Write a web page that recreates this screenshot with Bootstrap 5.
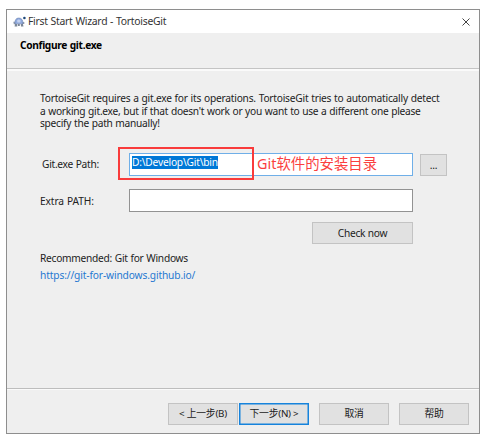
<!DOCTYPE html>
<html lang="zh-CN">
<head>
<meta charset="utf-8">
<meta name="viewport" content="width=device-width, initial-scale=1">
<title>First Start Wizard - TortoiseGit</title>
<link rel="stylesheet" href="https://cdn.jsdelivr.net/npm/bootstrap@5.3.0/dist/css/bootstrap.min.css">
<style>
body{background:#fff;overflow:hidden;font-family:"Noto Sans","Noto Sans CJK SC",sans-serif;font-size:10.2px;line-height:12.6px;letter-spacing:-.27px;word-spacing:.4px;color:#222}
.wizard{width:474px;height:425px;margin:9px 0 0 6px;border:1px solid #8e8e8e;background:#efefef}
.titlebar{height:23px;background:#fff;padding:0 9px 0 6px}
.caption{font-size:10.4px;color:#333;margin-left:2px;letter-spacing:-.27px}
.heading{height:38px;padding:6px 13px;border-bottom:2px solid #fafafa;box-shadow:inset 0 -1px #c4c4c4;color:#000;letter-spacing:-.33px}
.content-area{height:317px;padding:21px 32px 0 33px}
.intro{height:53px}
.intro .ln:first-child{letter-spacing:-.22px}
.field-row{height:23px}
.field-row label{width:89px}
.field-row .path-label{padding-left:2px;letter-spacing:-.28px}
.field-row .extra-label{letter-spacing:-.1px;padding-top:1px}
.extra-row{margin-top:13px}
.check-row{margin-top:10px}
.field-row .form-control{width:284px;height:23px;font-size:10.2px;line-height:12px;letter-spacing:-.2px;padding:2px;border:1px solid #929292;border-radius:0;background:#fff;color:#222}
.field-row .form-control.active-field{border-color:#6fafe8}
.selection{background:#0078d7;color:#fff;height:13px}
.btn-win{height:22px;padding:0;font-size:10.2px;line-height:12px;letter-spacing:-.25px;border:1px solid #c3c3c3;border-radius:0;background:#e1e1e1;color:#222}
.btn-win.btn-default-action{border:1px solid #1683dc;box-shadow:inset 0 0 0 .5px #1683dc}
.w-dots{width:27px;margin-left:7px}
.w-check{width:101px;margin-right:34px}
.w-step{width:70px;font-size:9.8px}
.gap-step{margin-left:1px}
.gap-group{margin-left:10px}
.site-link{color:#1f78d1;letter-spacing:-.13px}
.footer-bar{height:45px;border-top:1px solid #bdbdbd;box-shadow:inset 0 1px #fafafa;padding:14px 10px 0 0}
.callout-box{position:absolute;left:118px;top:147px;width:136px;height:33px;border:2px solid #f93b3b}
.callout-text{position:absolute;left:257px;top:154px;font-size:14.4px;line-height:20px;letter-spacing:0;color:#fb3f3f;white-space:nowrap}
.ln{display:block;white-space:nowrap;width:max-content}
</style>
<script src="https://cdn.jsdelivr.net/npm/bootstrap@5.3.0/dist/js/bootstrap.bundle.min.js"></script>
</head>
<body>
<main class="wizard">
  <header class="titlebar d-flex align-items-center">
    <svg width="13" height="12" viewBox="0 0 13 12" aria-hidden="true">
      <path d="M.3 5.8h2.5v2.4H.8zM9 6h2.3v2H9z" fill="#8e98a8"/>
      <path d="M2 7.8C1.5 4 3.2 2 5.8 2s4.5 2 4 5.8z" fill="#8fa9dc" stroke="#7186b4" stroke-width=".6"/>
      <path d="M4 4.4l1.8-1.2 1.9 1.2-.4 2H4.4z" fill="#c3d1ef"/>
      <path d="M2 8h2.3v2.6H1.6zM5 8h1.8v2H5zM7.8 8h2.1l.6 2.6H8z" fill="#7c8797"/>
      <circle cx="11.4" cy="2" r="1.3" fill="#1d4778"/>
    </svg>
    <span class="caption">First Start Wizard - TortoiseGit</span>
    <svg class="ms-auto" width="8" height="8" viewBox="0 0 8 8" aria-label="Close"><path d="M.5.5l7 7M7.5.5l-7 7" stroke="#444" stroke-width="1"/></svg>
  </header>
  <div class="heading fw-bold"><span class="ln">Configure git.exe</span></div>
  <section class="content-area">
    <div class="intro">
      <span class="ln">TortoiseGit requires a git.exe for its operations. TortoiseGit tries to automatically detect</span>
      <span class="ln">a working git.exe, but if that doesn't work or you want to use a different one please</span>
      <span class="ln">specify the path manually!</span>
    </div>
    <div class="d-flex align-items-center field-row mt-2">
      <label class="path-label">Git.exe Path:</label>
      <div class="form-control active-field d-flex"><span class="selection">D:\Develop\Git\bin</span></div>
      <button class="btn btn-win w-dots">...</button>
    </div>
    <div class="d-flex align-items-center field-row extra-row">
      <label class="extra-label">Extra PATH:</label>
      <input class="form-control" aria-label="Extra PATH">
    </div>
    <div class="d-flex justify-content-end check-row"><button class="btn btn-win w-check">Check now</button></div>
    <div class="mt-2"><span class="ln">Recommended: Git for Windows</span></div>
    <div class="mt-1"><a class="site-link ln text-decoration-none" href="#">https://git-for-windows.github.io/</a></div>
  </section>
  <footer class="footer-bar d-flex justify-content-end">
    <button class="btn btn-win w-step">&lt; 上一步(B)</button>
    <button class="btn btn-win btn-default-action w-step gap-step">下一步(N) &gt;</button>
    <button class="btn btn-win w-step gap-group">取消</button>
    <button class="btn btn-win w-step gap-group">帮助</button>
  </footer>
</main>
<div class="callout-box"></div>
<div class="callout-text">Git软件的安装目录</div>
</body>
</html>
